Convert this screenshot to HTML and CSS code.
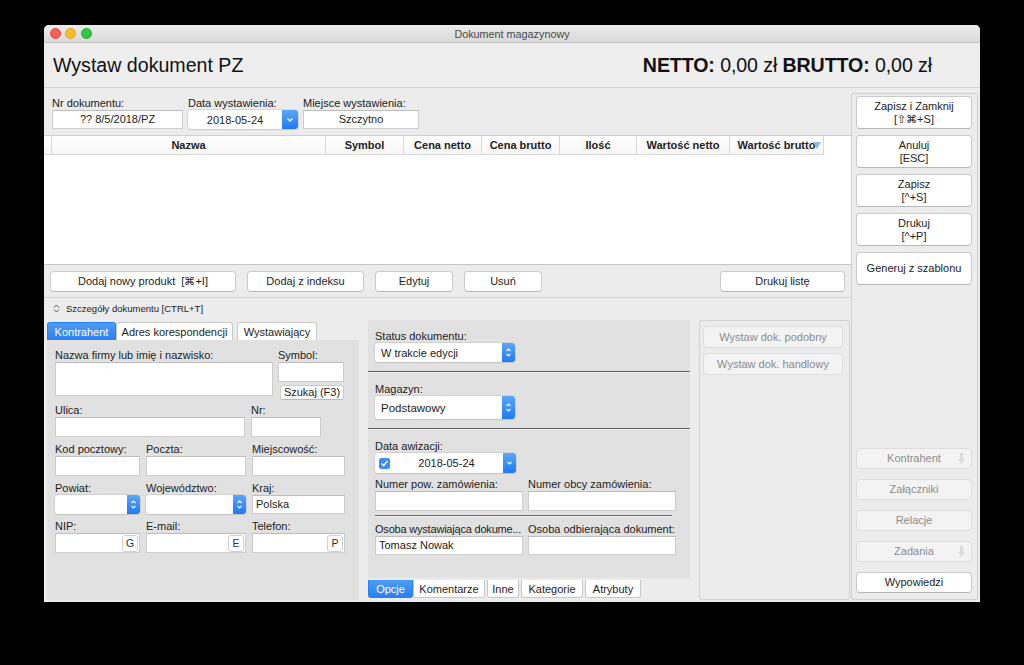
FILE: index.html
```html
<!DOCTYPE html>
<html lang="pl">
<head>
<meta charset="utf-8">
<title>Dokument magazynowy</title>
<link rel="stylesheet" href="styles.css">
</head>
<body>
<div class="window">
  <div class="titlebar">
    <div class="lights"><span class="light red"></span><span class="light yellow"></span><span class="light green"></span></div>
    <div class="title">Dokument magazynowy</div>
    <div></div>
  </div>
  <div class="header">
    <h1>Wystaw dokument PZ</h1>
    <div class="totals"><b>NETTO:</b> 0,00 zł <b>BRUTTO:</b> 0,00 zł</div>
  </div>
  <div class="main">
    <div class="content">
      <div class="docfields">
        <div class="dfield w131"><label>Nr dokumentu:</label><div class="input center">?? 8/5/2018/PZ</div></div>
        <div class="dfield w110"><label>Data wystawienia:</label>
          <div class="datebox"><span class="dtext">2018-05-24</span><span class="bluebtn w16"><svg width="16" height="19" viewBox="0 0 16 19"><path d="M5.5 8.5 L8 11 L10.5 8.5" fill="none" stroke="#fff" stroke-width="1.3"/></svg></span></div>
        </div>
        <div class="dfield w116"><label>Miejsce wystawienia:</label><div class="input center">Szczytno</div></div>
      </div>

      <div class="table">
        <div class="thead">
          <div class="th c0"></div>
          <div class="th c1">Nazwa</div>
          <div class="th c2">Symbol</div>
          <div class="th c3">Cena netto</div>
          <div class="th c4">Cena brutto</div>
          <div class="th c5">Ilość</div>
          <div class="th c6">Wartość netto</div>
          <div class="th c7">Wartość brutto<svg class="sorttri" width="8" height="7" viewBox="0 0 8 7"><polygon points="0,0 8,0 4,7" fill="#8fb9ea"/></svg></div>
        </div>
      </div>

      <div class="btnrow">
        <button class="btn b186">Dodaj nowy produkt&nbsp;&nbsp;[⌘+I]</button>
        <button class="btn b117">Dodaj z indeksu</button>
        <button class="btn b78">Edytuj</button>
        <button class="btn b78">Usuń</button>
        <button class="btn b125 push">Drukuj listę</button>
      </div>

      <div class="hsep"></div>

      <div class="toggle">
        <svg width="7" height="9" viewBox="0 0 7 9"><path d="M1 3.5 L3.5 1 L6 3.5 M1 5.5 L3.5 8 L6 5.5" fill="none" stroke="#555" stroke-width="1"/></svg>
        <span>Szczegóły dokumentu [CTRL+T]</span>
      </div>

      <div class="details">
        <div class="leftblock">
          <div class="tabs top">
            <span class="tab active t69">Kontrahent</span>
            <span class="tab t117">Adres korespondencji</span>
            <span class="tab t80 gap">Wystawiający</span>
          </div>
          <div class="tabpanel">
            <div class="frow">
              <div class="fcol w218"><label>Nazwa firmy lub imię i nazwisko:</label><div class="input tall"></div></div>
              <div class="fcol w66"><label>Symbol:</label><div class="input"></div><button class="btn mini">Szukaj (F3)</button></div>
            </div>
            <div class="frow r2">
              <div class="fcol w190"><label>Ulica:</label><div class="input"></div></div>
              <div class="fcol w70"><label>Nr:</label><div class="input"></div></div>
            </div>
            <div class="frow r3">
              <div class="fcol w85"><label>Kod pocztowy:</label><div class="input"></div></div>
              <div class="fcol w100"><label>Poczta:</label><div class="input"></div></div>
              <div class="fcol w93"><label>Miejscowość:</label><div class="input"></div></div>
            </div>
            <div class="frow r3">
              <div class="fcol w85"><label>Powiat:</label>
                <div class="select h19"><span class="stext"></span><span class="bluebtn w13"><svg width="13" height="19" viewBox="0 0 13 19"><path d="M4.5 8 L6.5 6 L8.5 8 M4.5 11 L6.5 13 L8.5 11" fill="none" stroke="#fff" stroke-width="1.1"/></svg></span></div>
              </div>
              <div class="fcol w100"><label>Województwo:</label>
                <div class="select h19"><span class="stext"></span><span class="bluebtn w13"><svg width="13" height="19" viewBox="0 0 13 19"><path d="M4.5 8 L6.5 6 L8.5 8 M4.5 11 L6.5 13 L8.5 11" fill="none" stroke="#fff" stroke-width="1.1"/></svg></span></div>
              </div>
              <div class="fcol w93"><label>Kraj:</label><div class="input left h19">Polska</div></div>
            </div>
            <div class="frow r3">
              <div class="fcol w85"><label>NIP:</label><div class="input withbtn"><span class="minibtn">G</span></div></div>
              <div class="fcol w100"><label>E-mail:</label><div class="input withbtn"><span class="minibtn">E</span></div></div>
              <div class="fcol w93"><label>Telefon:</label><div class="input withbtn"><span class="minibtn">P</span></div></div>
            </div>
          </div>
        </div>

        <div class="midblock">
          <div class="midpanel">
            <label class="ml first">Status dokumentu:</label>
            <div class="select w140 h19"><span class="stext">W trakcie edycji</span><span class="bluebtn w13"><svg width="13" height="19" viewBox="0 0 13 19"><path d="M4.5 8 L6.5 6 L8.5 8 M4.5 11 L6.5 13 L8.5 11" fill="none" stroke="#fff" stroke-width="1.1"/></svg></span></div>
            <div class="darksep"></div>
            <label class="ml">Magazyn:</label>
            <div class="select w140 h23"><span class="stext">Podstawowy</span><span class="bluebtn w13"><svg width="13" height="23" viewBox="0 0 13 23"><path d="M4.5 10 L6.5 8 L8.5 10 M4.5 13 L6.5 15 L8.5 13" fill="none" stroke="#fff" stroke-width="1.1"/></svg></span></div>
            <div class="darksep"></div>
            <label class="ml">Data awizacji:</label>
            <div class="datebox w141 h20">
              <span class="check"><svg width="11" height="11" viewBox="0 0 11 11"><rect x="0" y="0" width="11" height="11" rx="2.5" fill="#3a8ef6"/><path d="M2.6 5.6 L4.6 7.6 L8.4 3" fill="none" stroke="#fff" stroke-width="1.4"/></svg></span>
              <span class="dtext">2018-05-24</span>
              <span class="bluebtn w13"><svg width="13" height="20" viewBox="0 0 13 20"><path d="M4.5 9 L6.5 11 L8.5 9" fill="none" stroke="#fff" stroke-width="1.2"/></svg></span>
            </div>
            <div class="frow r4">
              <div class="fcol w148"><label>Numer pow. zamówienia:</label><div class="input"></div></div>
              <div class="fcol w148"><label>Numer obcy zamówienia:</label><div class="input"></div></div>
            </div>
            <div class="thinsep"></div>
            <div class="frow r5">
              <div class="fcol w148"><label class="clip">Osoba wystawiająca dokume...</label><div class="input left h19">Tomasz Nowak</div></div>
              <div class="fcol w148"><label>Osoba odbierająca dokument:</label><div class="input h19"></div></div>
            </div>
          </div>
          <div class="tabs bottom">
            <span class="tab active t45">Opcje</span>
            <span class="tab t72">Komentarze</span>
            <span class="tab t32 gap">Inne</span>
            <span class="tab t62 gap">Kategorie</span>
            <span class="tab t56 gap">Atrybuty</span>
          </div>
        </div>

        <div class="actions">
          <button class="btn dis a22">Wystaw dok. podobny</button>
          <button class="btn dis a22">Wystaw dok. handlowy</button>
        </div>
      </div>
    </div>

    <div class="side">
      <div class="sidetop">
        <button class="btn s33">Zapisz i Zamknij<br>[⇧⌘+S]</button>
        <button class="btn s33">Anuluj<br>[ESC]</button>
        <button class="btn s33">Zapisz<br>[^+S]</button>
        <button class="btn s33">Drukuj<br>[^+P]</button>
        <button class="btn s33">Generuj z szablonu</button>
      </div>
      <div class="sidebottom">
        <button class="btn dis s21 witharrow">Kontrahent<svg class="darr" width="7" height="11" viewBox="0 0 7 11"><path d="M2 0 H5 V6 H7 L3.5 11 L0 6 H2 Z" fill="#dcdcdc"/></svg></button>
        <button class="btn dis s21">Załączniki</button>
        <button class="btn dis s21">Relacje</button>
        <button class="btn dis s21 witharrow">Zadania<svg class="darr" width="7" height="11" viewBox="0 0 7 11"><path d="M2 0 H5 V6 H7 L3.5 11 L0 6 H2 Z" fill="#dcdcdc"/></svg></button>
        <button class="btn s21">Wypowiedzi</button>
      </div>
    </div>
  </div>
</div>
</body>
</html>
```

FILE: styles.css
```css
* { box-sizing: border-box; }
html, body { margin: 0; background: #000; }
body {
  padding: 25px 44px;
  font-family: "Liberation Sans", Arial, sans-serif;
  font-size: 11px;
  color: #1d1d1d;
}
label { display: block; line-height: 14px; white-space: nowrap; }
label.clip { letter-spacing: -0.2px; }

.window {
  width: 936px;
  height: 577px;
  background: #ececec;
  border-radius: 5px 5px 0 0;
  overflow: hidden;
  display: flex;
  flex-direction: column;
}

/* title bar */
.titlebar {
  height: 18px;
  flex: none;
  display: grid;
  grid-template-columns: 1fr auto 1fr;
  align-items: center;
  background: linear-gradient(#ececec, #d9d9d9);
  border-bottom: 1px solid #c4c4c4;
}
.lights { display: flex; gap: 4.5px; padding-left: 5.5px; }
.light { width: 11px; height: 11px; border-radius: 50%; }
.red { background: #fc5f57; border: 0.5px solid #e0443e; }
.yellow { background: #fdbc2e; border: 0.5px solid #dea123; }
.green { background: #33c748; border: 0.5px solid #27aa35; }
.title { font-size: 10.8px; color: #4a4a4a; }

/* header */
.header {
  height: 45px;
  flex: none;
  display: flex;
  align-items: center;
  justify-content: space-between;
  padding: 0 48px 0 9px;
  background: #eeeeee;
  border-bottom: 1px solid #d4d4d4;
}
.header h1 { margin: 0; font-size: 19.6px; font-weight: normal; color: #111; }
.totals { font-size: 19.6px; color: #111; letter-spacing: -0.1px; }

/* main */
.main { flex: 1; display: flex; min-height: 0; }
.content { width: 807px; display: flex; flex-direction: column; }

.docfields { display: flex; gap: 5px; padding: 8px 0 0 8px; }
.dfield label { color: #222; }
.w131 { width: 131px; }
.w110 { width: 110px; }
.w116 { width: 116px; }

.input {
  height: 20px;
  background: #fff;
  border: 1px solid #cdcdcd;
  border-top-color: #bdbdbd;
  line-height: 18px;
  white-space: nowrap;
  overflow: hidden;
}
.docfields .input { height: 19px; line-height: 17px; }
.input.center { text-align: center; }
.input.left { padding-left: 3px; }
.input.tall { height: 34px; }
.input.h19 { height: 19px; line-height: 17px; }

.datebox {
  height: 19px;
  display: flex;
  align-items: center;
  background: #fff;
  border-radius: 3px;
  box-shadow: 0 0 0 0.5px #c2c2c2, 0 1px 1px rgba(0,0,0,0.12);
}
.datebox .dtext { flex: 1; text-align: center; }
.datebox.w141 { width: 141px; }
.datebox.h20 { height: 20px; }

.bluebtn {
  align-self: stretch;
  display: flex;
  background: linear-gradient(#5aa6fa, #1f7af3);
  border-radius: 0 3px 3px 0;
  flex: none;
}
.bluebtn.w16 { width: 16px; }
.bluebtn.w13 { width: 13px; }

.check { display: flex; padding-left: 4px; }

.select {
  display: flex;
  background: #fff;
  border-radius: 3px;
  box-shadow: 0 0 0 0.5px #c2c2c2, 0 1px 1px rgba(0,0,0,0.12);
}
.select .stext { flex: 1; padding-left: 6px; white-space: nowrap; display: flex; align-items: center; }
.select.h19 { height: 19px; }
.select.h23 { height: 23px; font-size: 11.5px; }
.select.w140 { width: 140px; }

/* table */
.table {
  margin-top: 6px;
  height: 130px;
  flex: none;
  background: #fff;
  border-top: 1px solid #cfcfcf;
  border-bottom: 1px solid #c6c6c6;
}
.thead { display: flex; height: 19px; }
.th {
  position: relative;
  font-weight: bold;
  text-align: center;
  line-height: 18px;
  color: #222;
  background: linear-gradient(#ffffff, #f6f6f6);
  border-right: 1px solid #d8d8d8;
  border-bottom: 1px solid #d8d8d8;
  white-space: nowrap;
}
.c0 { width: 8px; }
.c1 { width: 274px; }
.c2, .c3, .c4 { width: 78px; }
.c5 { width: 77px; }
.c6 { width: 93px; }
.c7 { width: 94px; }
.sorttri { position: absolute; right: 2px; top: 6px; }

/* buttons */
.btn {
  margin: 0;
  padding: 0;
  background: #fff;
  border: 1px solid #cacaca;
  border-bottom-color: #b8b8b8;
  border-radius: 4px;
  font-family: "Liberation Sans", Arial, sans-serif;
  font-size: 11px;
  color: #1d1d1d;
  line-height: 13px;
  display: flex;
  align-items: center;
  justify-content: center;
  text-align: center;
}
.btn.dis {
  background: #f3f3f3;
  border-color: #dedede;
  color: #8c8c8c;
}
.btnrow { display: flex; gap: 11px; padding: 6px 6px 0 6px; }
.btnrow .btn { height: 21px; }
.b186 { width: 186px; }
.b117 { width: 117px; }
.b78 { width: 78px; }
.b125 { width: 125px; }
.push { margin-left: auto; }

.hsep { margin-top: 5px; height: 1px; background: #d3d3d3; }

.toggle {
  height: 22px;
  display: flex;
  align-items: center;
  gap: 6px;
  padding-left: 9px;
  padding-bottom: 2px;
  font-size: 9.5px;
  color: #222;
}

/* details */
.details { display: flex; padding-left: 3px; flex: 1; min-height: 0; }

.tabs { display: flex; height: 18px; }
.tab {
  height: 18px;
  display: flex;
  align-items: center;
  justify-content: center;
  background: #fff;
  border: 1px solid #c8c8c8;
  color: #1d1d1d;
  white-space: nowrap;
}
.tabs.top .tab { border-radius: 3px 3px 0 0; border-bottom: none; }
.tabs.bottom .tab { border-radius: 0 0 3px 3px; border-top: none; }
.tab.active {
  background: linear-gradient(#4c9cf9, #2a80f3);
  border-color: #2a7ff0;
  color: #fff;
}
.tab.gap { margin-left: 2px; }
.t69 { width: 69px; }
.t117 { width: 117px; }
.t80 { width: 80px; }
.t45 { width: 45px; }
.t72 { width: 72px; }
.t32 { width: 32px; }
.t62 { width: 62px; }
.t56 { width: 56px; }

.leftblock { width: 312px; padding-top: 2px; display: flex; flex-direction: column; }
.tabs.top .t80 { margin-left: 4px; }
.tabpanel {
  height: 260px;
  background: #e1e1e1;
  padding: 8px 0 0 8px;
}
.frow { display: flex; gap: 5px; }
.frow.r2 { margin-top: 3px; gap: 6px; }
.frow.r3 { margin-top: 5px; gap: 6px; }
.fcol { display: flex; flex-direction: column; }
.w218 { width: 218px; }
.w66 { width: 66px; }
.w190 { width: 190px; }
.w70 { width: 70px; }
.w85 { width: 85px; }
.w100 { width: 100px; }
.w93 { width: 93px; }
.w148 { width: 148px; }
.btn.mini { height: 15px; width: 64px; margin: 3px 0 0 2px; border-radius: 3px; }

.input.withbtn { display: flex; justify-content: flex-end; align-items: center; padding-right: 1px; }
.minibtn {
  width: 16px;
  height: 17px;
  display: flex;
  align-items: center;
  justify-content: center;
  background: #fff;
  border: 1px solid #cfcfcf;
  border-radius: 3px;
  font-size: 10.5px;
  color: #333;
}

.midblock { width: 322px; margin-left: 9px; display: flex; flex-direction: column; }
.midpanel {
  height: 258px;
  background: #e1e1e1;
  padding: 9px 0 0 7px;
  margin-bottom: 2px;
}
.ml { margin-top: 9px; }
.ml.first { margin-top: 0; }
.darksep {
  margin: 9px 0 0 -7px;
  height: 2px;
  border-top: 1px solid #5f5f5f;
  border-bottom: 1px solid #f2f2f2;
}
.frow.r4 { margin-top: 4px; }
.thinsep {
  margin: 4px 18px 0 0;
  height: 2px;
  border-top: 1px solid #6a6a6a;
  border-bottom: 1px solid #f0f0f0;
}
.frow.r5 { margin-top: 5px; }

.actions {
  width: 151px;
  height: 280px;
  margin-left: 9px;
  border: 1px solid #d2d2d2;
  border-radius: 3px;
  padding: 5px 6px 0 3px;
  display: flex;
  flex-direction: column;
  gap: 5px;
}
.btn.a22 { height: 22px; }

/* side */
.side {
  width: 127px;
  margin: 5px 2px 2px 0;
  border: 1px solid #d0d0d0;
  border-radius: 2px;
  padding: 2px 5px 6px 4px;
  display: flex;
  flex-direction: column;
  justify-content: space-between;
}
.sidetop { display: flex; flex-direction: column; gap: 6px; }
.sidebottom { display: flex; flex-direction: column; gap: 10px; }
.btn.s33 { height: 33px; }
.btn.s21 { height: 21px; }
.witharrow { position: relative; }
.darr { position: absolute; right: 6px; top: 4px; }
```
